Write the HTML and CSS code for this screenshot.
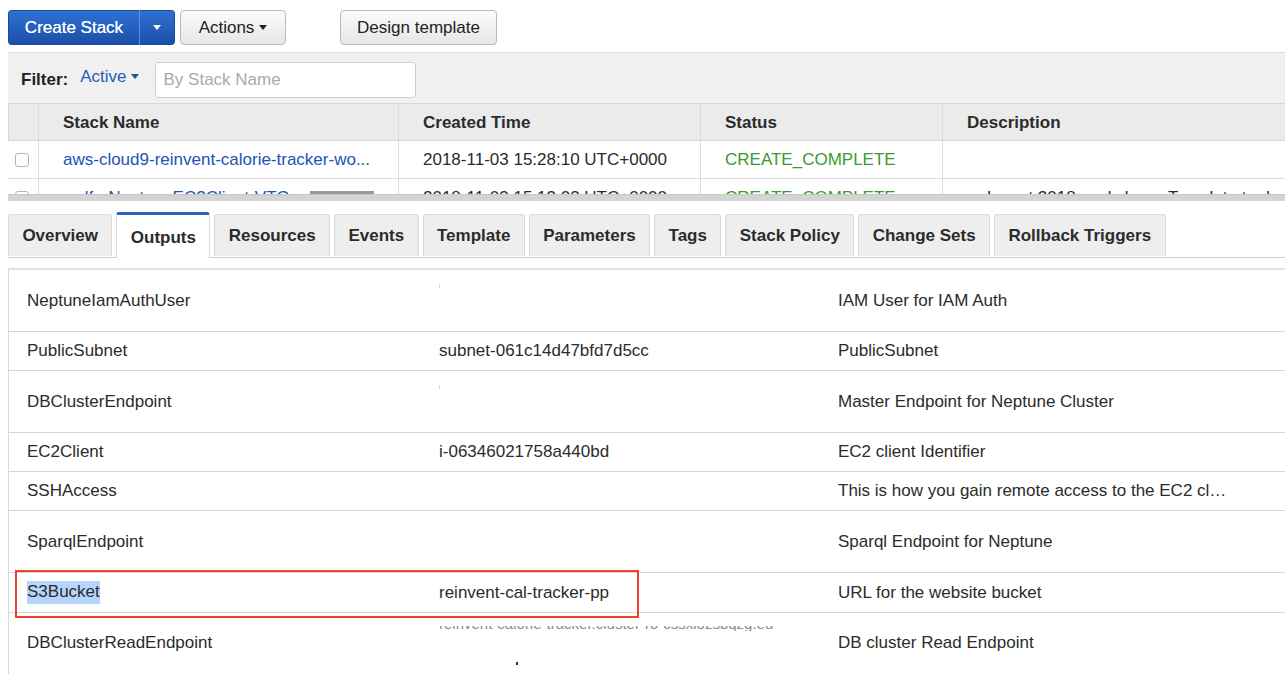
FILE: index.html
```html
<!DOCTYPE html>
<html lang="en">
<head>
<meta charset="utf-8">
<title>CloudFormation Stacks</title>
<link rel="stylesheet" href="styles.css">
</head>
<body>
<div class="page">
  <div class="toolbar">
    <div class="split">
      <button class="btn-primary main">Create Stack</button>
      <button class="btn-primary caret-btn"><span class="caret white"></span></button>
    </div>
    <button class="btn actions">Actions <span class="caret"></span></button>
    <button class="btn design">Design template</button>
  </div>

  <div class="filter-bar">
    <span class="filter-label">Filter:</span>
    <span class="filter-active">Active <span class="caret blue"></span></span>
    <input class="search" type="text" placeholder="By Stack Name">
  </div>

  <div class="stack-wrap">
    <div class="srow head">
      <div class="c chk"></div>
      <div class="c">Stack Name</div>
      <div class="c">Created Time</div>
      <div class="c">Status</div>
      <div class="c">Description</div>
    </div>
    <div class="srow">
      <div class="c chk"><span class="checkbox"></span></div>
      <div class="c link">aws-cloud9-reinvent-calorie-tracker-wo...</div>
      <div class="c">2018-11-03 15:28:10 UTC+0000</div>
      <div class="c ok">CREATE_COMPLETE</div>
      <div class="c"></div>
    </div>
    <div class="srow">
      <div class="c chk"><span class="checkbox"></span></div>
      <div class="c link">wolfe-NeptuneEC2Client-VTG <span class="badge">NESTED</span></div>
      <div class="c">2018-11-03 15:13:03 UTC+0000</div>
      <div class="c ok">CREATE_COMPLETE</div>
      <div class="c">re:Invent 2018 workshop - Template to deploy</div>
    </div>
  </div>
  <div class="hscroll"></div>

  <div class="tabs">
    <div class="tab">Overview</div>
    <div class="tab active">Outputs</div>
    <div class="tab">Resources</div>
    <div class="tab">Events</div>
    <div class="tab">Template</div>
    <div class="tab">Parameters</div>
    <div class="tab">Tags</div>
    <div class="tab">Stack Policy</div>
    <div class="tab">Change Sets</div>
    <div class="tab">Rollback Triggers</div>
  </div>

  <div class="outputs">
    <div class="orow tall">
      <div class="oc">NeptuneIamAuthUser</div>
      <div class="oc"><span class="speck s1"></span></div>
      <div class="oc">IAM User for IAM Auth</div>
    </div>
    <div class="orow">
      <div class="oc">PublicSubnet</div>
      <div class="oc">subnet-061c14d47bfd7d5cc</div>
      <div class="oc">PublicSubnet</div>
    </div>
    <div class="orow tall">
      <div class="oc">DBClusterEndpoint</div>
      <div class="oc"><span class="speck s1"></span></div>
      <div class="oc">Master Endpoint for Neptune Cluster</div>
    </div>
    <div class="orow">
      <div class="oc">EC2Client</div>
      <div class="oc">i-06346021758a440bd</div>
      <div class="oc">EC2 client Identifier</div>
    </div>
    <div class="orow">
      <div class="oc">SSHAccess</div>
      <div class="oc"></div>
      <div class="oc">This is how you gain remote access to the EC2 cl…</div>
    </div>
    <div class="orow tall">
      <div class="oc">SparqlEndpoint</div>
      <div class="oc"></div>
      <div class="oc">Sparql Endpoint for Neptune</div>
    </div>
    <div class="orow s3">
      <div class="oc"><span class="sel">S3Bucket</span></div>
      <div class="oc">reinvent-cal-tracker-pp</div>
      <div class="oc">URL for the website bucket</div>
      <div class="highlight-box"></div>
    </div>
    <div class="orow tall last">
      <div class="oc">DBClusterReadEndpoint</div>
      <div class="oc val-clip"><span class="clip"><span class="clip-text">reinvent-calorie-tracker.cluster-ro-cssxiozsbqzg.eu-</span></span><span class="dot"></span></div>
      <div class="oc">DB cluster Read Endpoint</div>
    </div>
  </div>
</div>
</body>
</html>
```

FILE: styles.css
```css
* { box-sizing: border-box; }

html, body {
  margin: 0;
  padding: 0;
  background: #ffffff;
}

body {
  font-family: "Liberation Sans", Arial, Helvetica, sans-serif;
  font-size: 17px;
  color: #2b2b2b;
}

.page {
  padding-left: 8px;
  width: 1285px;
  height: 674px;
  overflow: hidden;
}

/* toolbar */
.toolbar {
  display: flex;
  align-items: center;
  height: 35px;
  margin-top: 10px;
}

.split {
  display: flex;
  height: 35px;
}

.btn-primary {
  font-family: inherit;
  font-size: 17px;
  color: #ffffff;
  background: linear-gradient(#2f72d4, #1b4fa8);
  border: 1px solid #1b4a9c;
  height: 35px;
  margin: 0;
  padding: 0;
  cursor: pointer;
}

.btn-primary.main {
  width: 132px;
  border-radius: 4px 0 0 4px;
  border-right: 1px solid #5d8fd9;
  text-shadow: 0 0 0.4px #ffffff;
}

.btn-primary.caret-btn {
  width: 35px;
  border-left: none;
  border-radius: 0 4px 4px 0;
  display: flex;
  align-items: center;
  justify-content: center;
}

.btn {
  font-family: inherit;
  font-size: 17px;
  color: #222;
  background: linear-gradient(#fbfbfb, #e6e6e6);
  border: 1px solid #b9b9b9;
  border-radius: 4px;
  height: 35px;
  margin: 0;
  padding: 0;
  display: flex;
  align-items: center;
  justify-content: center;
  gap: 5px;
}

.btn.actions {
  width: 106px;
  margin-left: 5px;
}

.btn.design {
  width: 157px;
  margin-left: 54px;
}

.caret {
  display: inline-block;
  width: 0;
  height: 0;
  border-left: 4.5px solid transparent;
  border-right: 4.5px solid transparent;
  border-top: 5px solid #222;
}

.caret.white { border-top-color: #ffffff; }
.caret.blue { border-top-color: #1f4fa3; }

/* filter */
.filter-bar {
  margin-top: 7px;
  height: 51px;
  background: #f0f0f0;
  border-top: 1px solid #dcdcdc;
  display: flex;
  align-items: center;
  padding-left: 13px;
}

.filter-label {
  font-weight: bold;
  color: #222;
  margin-top: 3px;
}

.filter-active {
  color: #2a5bbd;
  margin-left: 12px;
  display: flex;
  align-items: center;
  gap: 4px;
  margin-top: -3px;
}

.search {
  margin-left: 16px;
  width: 261px;
  height: 36px;
  border: 1px solid #d0d0d0;
  border-radius: 3px;
  background: #ffffff;
  font-family: inherit;
  font-size: 17px;
  padding: 0 8px;
  margin-top: 4px;
  outline: none;
}

.search::placeholder { color: #aaaaaa; }

/* stack table */
.stack-wrap {
  height: 91px;
  overflow: hidden;
}

.srow {
  display: grid;
  grid-template-columns: 30px 360px 302px 242px 1fr;
  height: 38px;
  border-bottom: 1px solid #dcdcdc;
  background: #ffffff;
}

.srow.head {
  background: #ebebeb;
  font-weight: bold;
  border-top: 1px solid #d6d6d6;
  border-bottom: 1px solid #d6d6d6;
}

.srow.head .c { padding-top: 2px; }

.c {
  display: flex;
  align-items: center;
  padding-left: 24px;
  border-left: 1px solid #dcdcdc;
  white-space: nowrap;
  overflow: hidden;
}

.c.chk {
  padding-left: 7px;
  border-left: none;
}

.srow.head .c.chk { border-left: 1px solid #d6d6d6; }

.checkbox {
  display: inline-block;
  width: 14px;
  height: 14px;
  border: 1px solid #b5b5b5;
  border-radius: 3px;
  background: #fff;
}

.link { color: #2053b8; }
.ok { color: #3a9a2f; }

.badge {
  display: inline-block;
  background: #9a9a9a;
  color: #ffffff;
  font-size: 12px;
  padding: 3px 8px;
  margin-left: 20px;
  margin-top: 6px;
}

.hscroll {
  height: 7px;
  background: #d4d4d4;
  border-top: 1px solid #c6c6c6;
}

/* tabs */
.tabs {
  display: flex;
  align-items: flex-end;
  gap: 4px;
  margin-top: 12px;
  height: 45px;
  border-bottom: 1px solid #cfcfcf;
}

.tab {
  height: 42px;
  padding: 0 13.4px;
  display: flex;
  align-items: center;
  background: #eeeeee;
  border: 1px solid #dadada;
  border-bottom: none;
  border-radius: 3px 3px 0 0;
  font-weight: bold;
  color: #2b2b2b;
  margin-bottom: 1px;
}

.tab.active {
  height: 46px;
  background: #ffffff;
  border-top: 3px solid #2a62c4;
  margin-bottom: -1px;
  padding-top: 2px;
  border-radius: 3px 3px 0 0;
}

/* outputs */
.outputs {
  margin-top: 10px;
  border-top: 2px solid #e2e2e2;
  border-left: 1px solid #d8d8d8;
}

.orow {
  display: grid;
  grid-template-columns: 411px 399px 1fr;
  height: 39px;
  border-bottom: 1px solid #d6d6d6;
  position: relative;
}

.orow.tall { height: 62px; }
.orow.s3 { height: 40px; }
.orow.last { height: 80px; border-bottom: none; }

.oc {
  display: flex;
  align-items: center;
  padding-left: 18px;
  white-space: nowrap;
  overflow: hidden;
  color: #2b2b2b;
  position: relative;
}

.orow .oc:nth-child(2),
.orow .oc:nth-child(3) { padding-left: 19px; }

.orow.last .oc { align-items: flex-start; padding-top: 20px; }

.sel {
  background: #b5d5fd;
  padding: 1px 0 2px;
}

.highlight-box {
  position: absolute;
  left: 6px;
  top: -3px;
  width: 624px;
  height: 48px;
  border: 2px solid #e4452c;
  pointer-events: none;
}

.speck {
  position: absolute;
  left: 19px;
  width: 1px;
  background: #d8d8d8;
}

.speck.s1 { top: 14px; height: 4px; }

.orow.last .val-clip {
  padding-top: 0;
  display: block;
}

.clip {
  position: absolute;
  left: 19px;
  top: 13px;
  height: 5px;
  overflow: hidden;
  display: block;
  width: 385px;
}

.clip-text {
  display: block;
  font-size: 15px;
  line-height: 17px;
  margin-top: -11px;
  color: #8a8a8a;
}

.dot {
  position: absolute;
  left: 96px;
  top: 49px;
  width: 2px;
  height: 3px;
  background: #333;
}
```
